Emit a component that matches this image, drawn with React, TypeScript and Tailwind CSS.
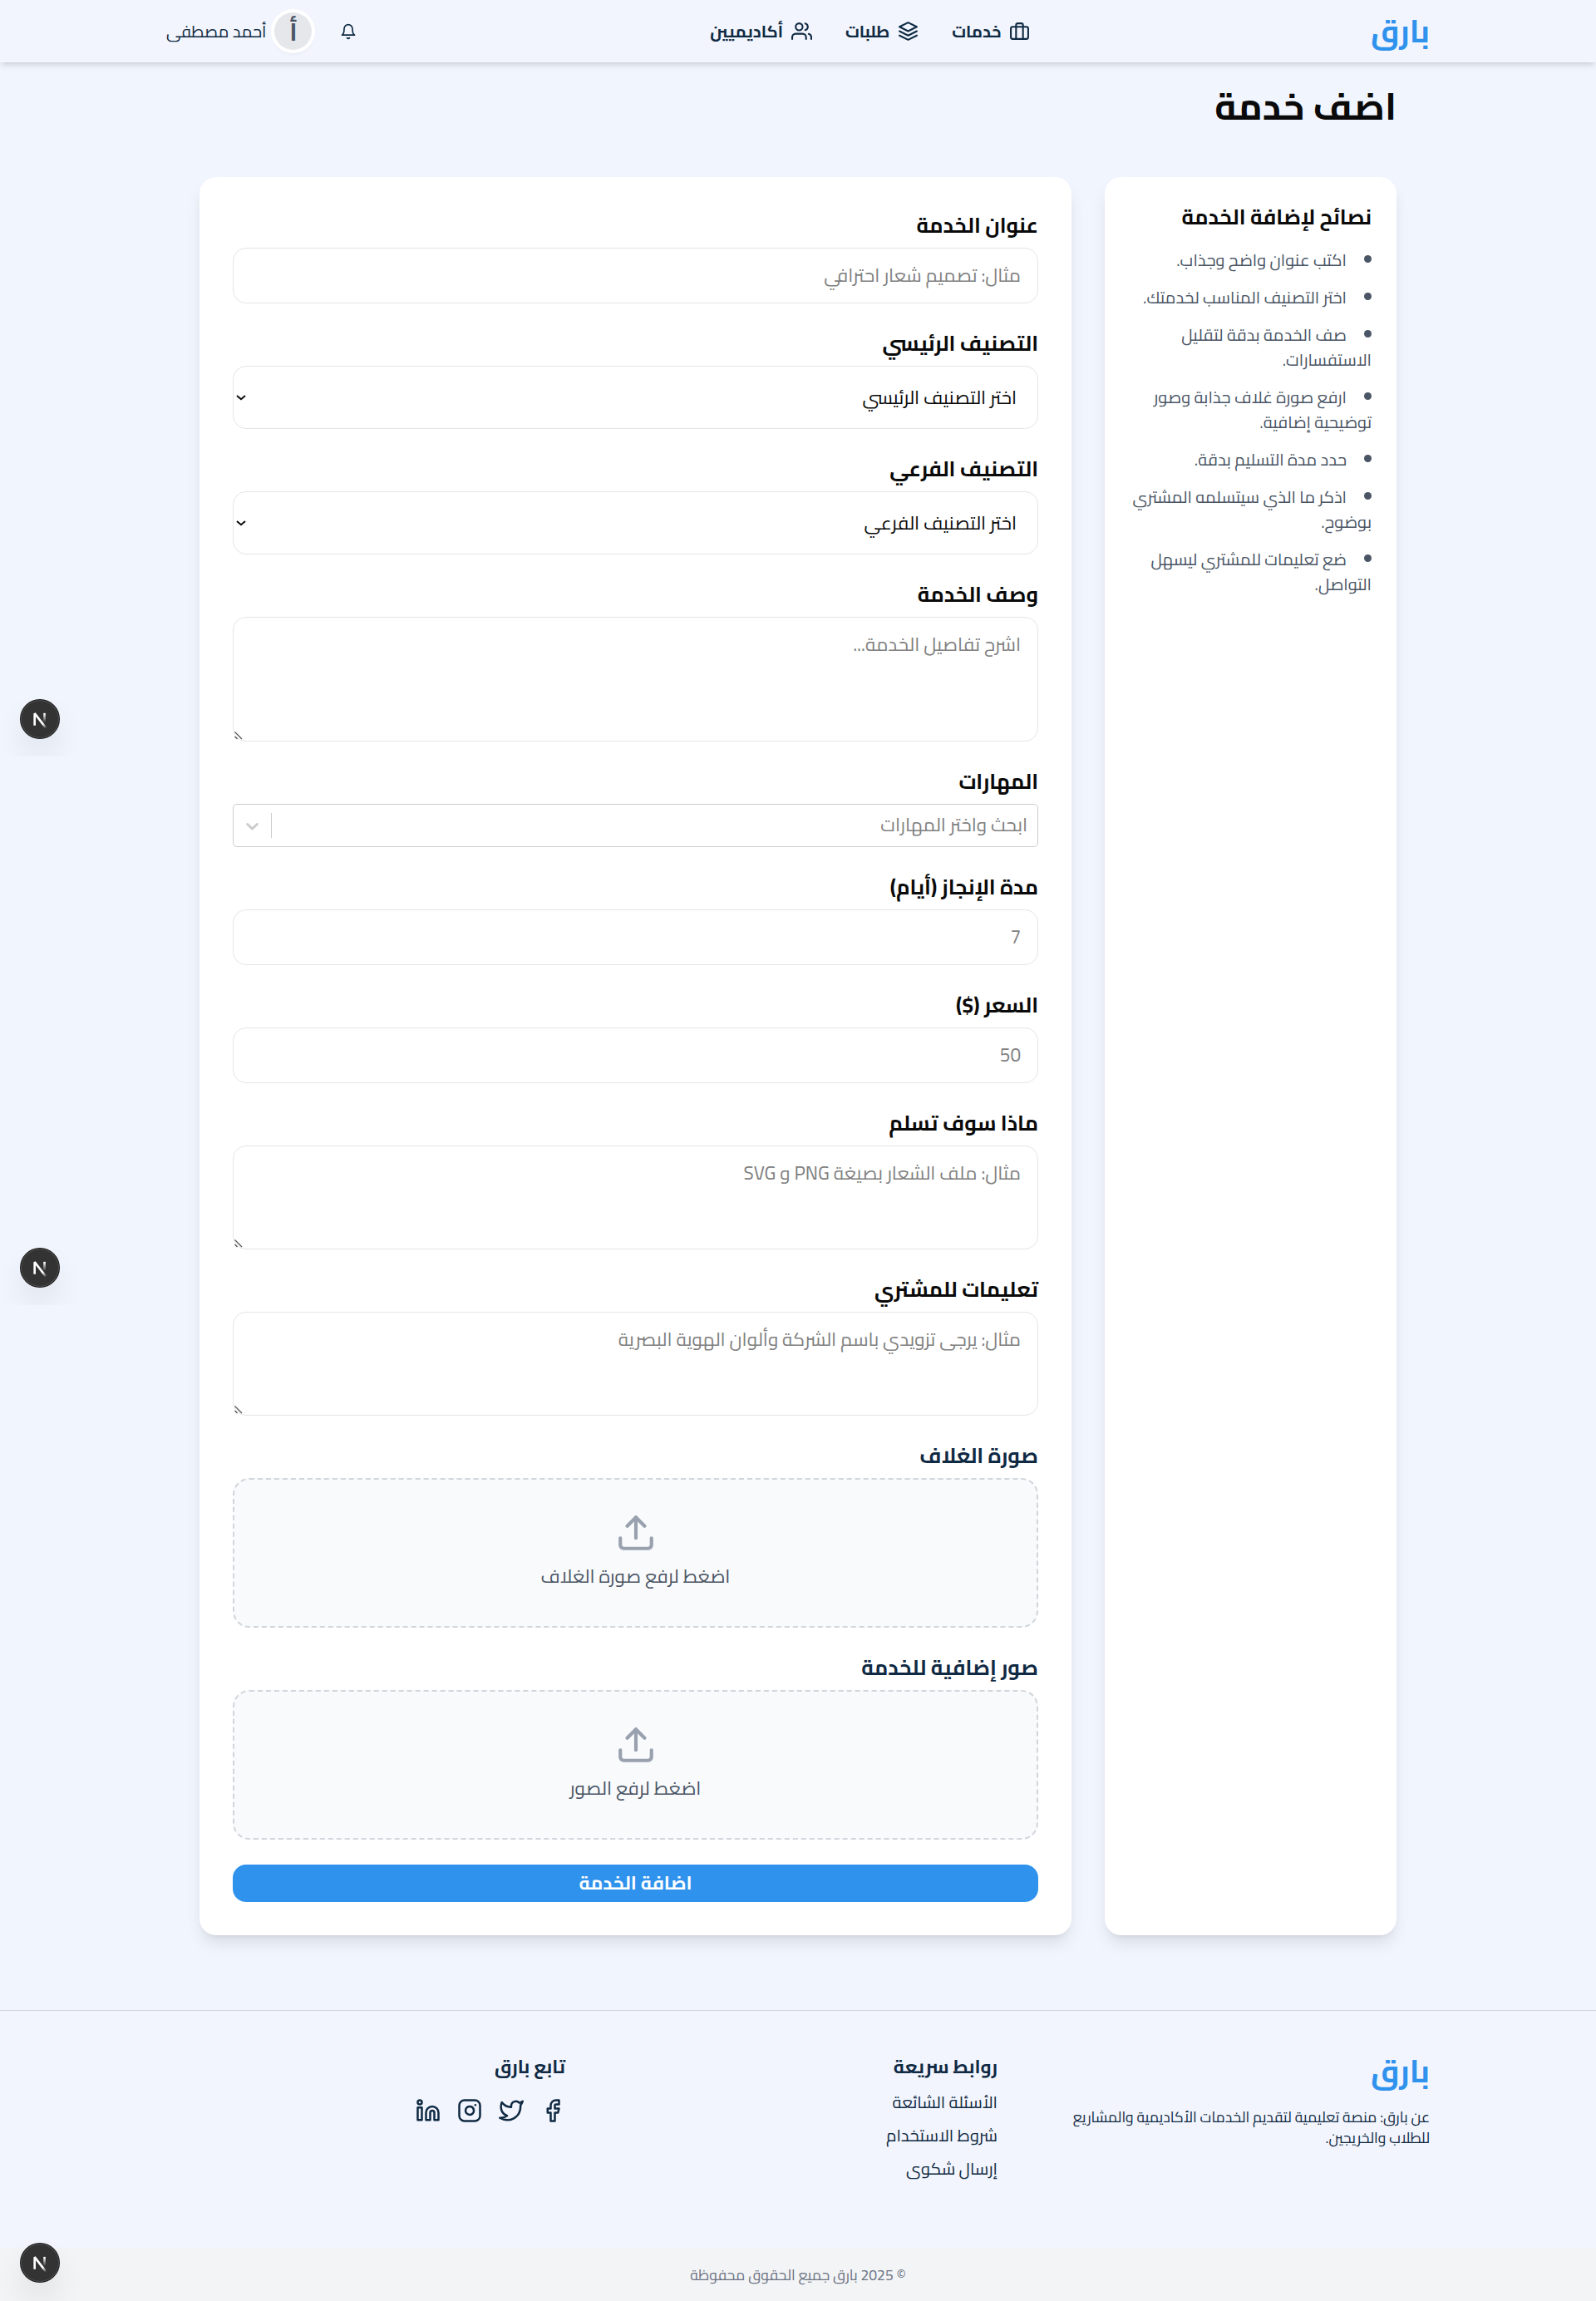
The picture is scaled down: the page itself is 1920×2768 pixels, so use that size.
import type { ReactNode } from "react";
import {
  FiBell,
  FiBriefcase,
  FiFacebook,
  FiInstagram,
  FiLayers,
  FiLinkedin,
  FiTwitter,
  FiUpload,
  FiUsers,
} from "react-icons/fi";

// The whole interface is sized against a 20px root.
document.documentElement.classList.add("text-[20px]");

const tips = [
  "اكتب عنوان واضح وجذاب.",
  "اختر التصنيف المناسب لخدمتك.",
  "صف الخدمة بدقة لتقليل الاستفسارات.",
  "ارفع صورة غلاف جذابة وصور توضيحية إضافية.",
  "حدد مدة التسليم بدقة.",
  "اذكر ما الذي سيتسلمه المشتري بوضوح.",
  "ضع تعليمات للمشتري ليسهل التواصل.",
];

const controlClass =
  "block w-full rounded-[16px] border border-[#e5e5e5] bg-white px-4 text-lg placeholder:text-[#808080] outline-none";

const cardClass =
  "rounded-[20px] bg-white shadow-[0_12.5px_18.75px_-3.75px_rgba(0,0,0,0.1),0_5px_7.5px_-5px_rgba(0,0,0,0.1)]";

function Header() {
  return (
    <header className="h-[75px] bg-[#f2f5fd] shadow-[0_5px_7.5px_-1.25px_rgba(0,0,0,0.1),0_2.5px_5px_-2.5px_rgba(0,0,0,0.1)]">
      <div className="mx-auto flex h-full w-[1520px] items-center justify-between">
        <a className="text-3xl font-bold text-[#2f92ed]">بارق</a>
        <nav className="flex items-center gap-8 pl-[5px] font-bold">
          <a className="flex items-center gap-2">
            <FiBriefcase size={25} />
            خدمات
          </a>
          <a className="flex items-center gap-2">
            <FiLayers size={25} />
            طلبات
          </a>
          <a className="flex items-center gap-2">
            <FiUsers size={25} />
            أكاديميين
          </a>
        </nav>
        <div className="flex items-center gap-[24px]">
          <button className="p-2">
            <FiBell size={20} />
          </button>
          <div className="flex items-center gap-2">
            <span className="flex size-[45px] items-center justify-center rounded-full bg-gray-200 text-2xl font-bold text-gray-600 shadow-md ring-4 ring-white">
              أ
            </span>
            <span>أحمد مصطفى</span>
          </div>
        </div>
      </div>
    </header>
  );
}

function Field({ label, dark, children }: { label: string; dark?: boolean; children: ReactNode }) {
  return (
    <div>
      <label className={`mb-2 block text-xl font-bold ${dark ? "text-[#102a43]" : "text-[#0a0a0a]"}`}>{label}</label>
      {children}
    </div>
  );
}

function SelectBox({ text }: { text: string }) {
  return (
    <div className="relative">
      <select className={`${controlClass} h-[76px] appearance-none pr-5`}>
        <option>{text}</option>
      </select>
      <svg
        className="pointer-events-none absolute top-[34px] left-[4px]"
        width="12"
        height="9"
        viewBox="0 0 12 9"
        fill="none"
        stroke="#0a0a0a"
        strokeWidth="2"
      >
        <path d="M1 2L6 6.3L11 2" />
      </svg>
    </div>
  );
}

function TextArea({ tall, placeholder }: { tall?: boolean; placeholder: string }) {
  return (
    <div className="relative">
      <textarea
        className={`${controlClass} resize-none py-3 ${tall ? "h-[150px]" : "h-[125px]"}`}
        placeholder={placeholder}
      />
      <svg
        className="pointer-events-none absolute bottom-[2px] left-[2px]"
        width="10"
        height="10"
        viewBox="0 0 10 10"
        fill="none"
        stroke="#555555"
        strokeWidth="1.3"
      >
        <path d="M0.5 0.5L9 9M0.5 6L3.5 9" />
      </svg>
    </div>
  );
}

function UploadBox({ text }: { text: string }) {
  return (
    <div className="flex h-[180px] flex-col items-center justify-center gap-2 rounded-[20px] border-2 border-dashed border-gray-300 bg-gray-50 pb-[3px]">
      <FiUpload size={50} className="text-gray-400" />
      <span className="text-lg text-gray-600">{text}</span>
    </div>
  );
}

function Aside() {
  return (
    <aside className={`${cardClass} w-[351px] p-6`}>
      <h3 className="mb-4 text-xl font-bold text-[#0a0a0a]">نصائح لإضافة الخدمة</h3>
      <ul className="list-inside list-disc space-y-3 text-gray-600">
        {tips.map((tip) => (
          <li key={tip}>{tip}</li>
        ))}
      </ul>
    </aside>
  );
}

function ServiceForm() {
  return (
    <form className={`${cardClass} flex w-[1049px] flex-col gap-6 p-8 text-[#0a0a0a]`}>
      <Field label="عنوان الخدمة">
        <input className={`${controlClass} h-[67px] pb-[2px]`} placeholder="مثال: تصميم شعار احترافي" />
      </Field>
      <Field label="التصنيف الرئيسي">
        <SelectBox text="اختر التصنيف الرئيسي" />
      </Field>
      <Field label="التصنيف الفرعي">
        <SelectBox text="اختر التصنيف الفرعي" />
      </Field>
      <Field label="وصف الخدمة">
        <TextArea tall placeholder="اشرح تفاصيل الخدمة..." />
      </Field>
      <Field label="المهارات">
        <div className="flex h-[52px] items-center rounded-[5px] border border-[#cccccc] bg-white">
          <span className="flex-1 px-[12px] pb-[2px] text-lg text-[#808080]">ابحث واختر المهارات</span>
          <span className="my-2 w-px self-stretch bg-[#cccccc]" />
          <span className="px-2 text-[#cccccc]">
            <svg width="25" height="25" viewBox="0 0 20 20" fill="currentColor">
              <path d="M4.516 7.548c0.436-0.446 1.043-0.481 1.576 0l3.908 3.747 3.908-3.747c0.533-0.481 1.141-0.446 1.574 0 0.436 0.445 0.408 1.197 0 1.615-0.406 0.418-4.695 4.502-4.695 4.502-0.217 0.223-0.502 0.335-0.787 0.335s-0.57-0.112-0.789-0.335c0 0-4.287-4.084-4.695-4.502s-0.436-1.17 0-1.615z" />
            </svg>
          </span>
        </div>
      </Field>
      <Field label="مدة الإنجاز (أيام)">
        <input className={`${controlClass} h-[67px] pb-[2px]`} placeholder="7" />
      </Field>
      <Field label="السعر ($)">
        <input className={`${controlClass} h-[67px] pb-[2px]`} placeholder="50" />
      </Field>
      <Field label="ماذا سوف تسلم">
        <TextArea placeholder="مثال: ملف الشعار بصيغة PNG و SVG" />
      </Field>
      <Field label="تعليمات للمشتري">
        <TextArea placeholder="مثال: يرجى تزويدي باسم الشركة وألوان الهوية البصرية" />
      </Field>
      <Field label="صورة الغلاف" dark>
        <UploadBox text="اضغط لرفع صورة الغلاف" />
      </Field>
      <Field label="صور إضافية للخدمة" dark>
        <UploadBox text="اضغط لرفع الصور" />
      </Field>
      <button type="button" className="h-[45px] rounded-[16px] bg-[#2f92ed] text-lg font-bold text-white">
        اضافة الخدمة
      </button>
    </form>
  );
}

function Footer() {
  return (
    <footer className="mt-[90px] flex flex-1 flex-col border-t border-gray-300 bg-[#f2f5fd]">
      <div className="mx-auto grid w-[1520px] flex-1 grid-cols-3 gap-8 pt-10">
        <div>
          <div className="text-3xl font-bold text-[#2f92ed]">بارق</div>
          <p className="mt-4 w-[450px] text-sm">
            عن بارق: منصة تعليمية لتقديم الخدمات الأكاديمية والمشاريع للطلاب والخريجين.
          </p>
        </div>
        <div>
          <h4 className="text-lg font-bold">روابط سريعة</h4>
          <ul className="mt-2 space-y-2">
            <li>الأسئلة الشائعة</li>
            <li>شروط الاستخدام</li>
            <li>إرسال شكوى</li>
          </ul>
        </div>
        <div>
          <h4 className="text-lg font-bold">تابع بارق</h4>
          <div className="mt-4 flex gap-4">
            <FiFacebook size={30} />
            <FiTwitter size={30} />
            <FiInstagram size={30} />
            <FiLinkedin size={30} />
          </div>
        </div>
      </div>
      <div className="bg-gray-100 pt-[20px] pb-[19px] text-center text-sm text-gray-500">
        © 2025 بارق جميع الحقوق محفوظة
      </div>
    </footer>
  );
}

function DevBadge({ id }: { id: string }) {
  return (
    <span className="flex size-[46px] items-center justify-center rounded-full bg-[#333333] shadow-[0_0_0_1px_#171717,inset_0_0_0_1px_rgba(255,255,255,0.14),0_20px_40px_-10px_rgba(0,0,0,0.24)]">
      <svg className="shrink-0" width="50" height="50" viewBox="0 0 40 40" fill="none">
        <g transform="translate(12.6 13.5)" strokeWidth="2.1">
          <path d="M13.3 15.2L2.34 1V12.6" stroke={`url(#a${id})`} strokeLinejoin="bevel" />
          <path d="M11.825 0.8V13.1" stroke={`url(#b${id})`} />
        </g>
        <defs>
          <linearGradient id={`a${id}`} x1="9.956" y1="11.123" x2="15.478" y2="17.967" gradientUnits="userSpaceOnUse">
            <stop stopColor="white" />
            <stop offset="0.604" stopColor="white" stopOpacity="0" />
          </linearGradient>
          <linearGradient id={`b${id}`} x1="11.822" y1="1.4" x2="11.791" y2="9.625" gradientUnits="userSpaceOnUse">
            <stop stopColor="white" />
            <stop offset="1" stopColor="white" stopOpacity="0" />
          </linearGradient>
        </defs>
      </svg>
    </span>
  );
}

export default function App() {
  return (
    <div
      dir="rtl"
      className="relative flex h-[2768px] flex-col overflow-hidden bg-[#f1f5fe] font-['Cairo',sans-serif] text-base text-[#102a43]"
    >
      <Header />
      <main className="mx-auto w-[1440px]">
        <h1 className="mt-[28px] mb-[60px] text-4xl font-bold text-[#0a0a0a]">اضف خدمة</h1>
        <div className="flex gap-8">
          <Aside />
          <ServiceForm />
        </div>
      </main>
      <Footer />
      <div className="absolute top-[810px] left-0 flex h-[100px] w-[110px] items-center justify-end overflow-hidden pt-[9px] pl-[25px]">
        <DevBadge id="1" />
      </div>
      <div className="absolute top-[1470px] left-0 flex h-[100px] w-[110px] items-center justify-end overflow-hidden pt-[9px] pl-[25px]">
        <DevBadge id="2" />
      </div>
      <div className="absolute top-[2667px] left-0 flex h-[101px] w-[110px] items-center justify-end overflow-hidden pt-[8px] pl-[25px]">
        <DevBadge id="3" />
      </div>
    </div>
  );
}
